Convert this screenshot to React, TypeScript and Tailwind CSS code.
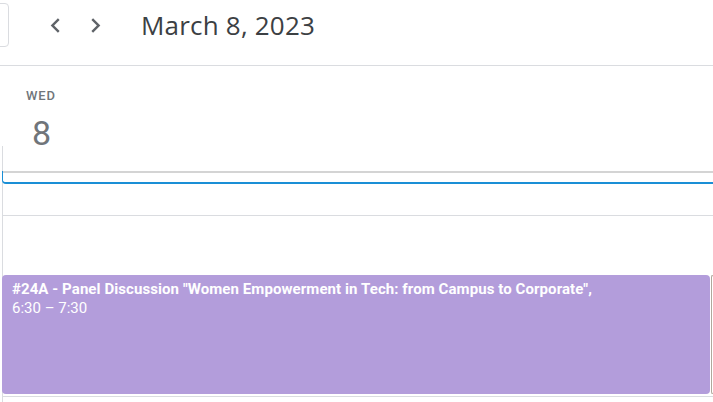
import React from 'react'

function Chevron({ dir }: { dir: 'left' | 'right' }) {
  return (
    <svg width="29" height="29" viewBox="0 0 24 24" fill="#5f6368">
      {dir === 'left' ? (
        <path d="M15.41 7.41 14 6l-6 6 6 6 1.41-1.41L10.83 12z" />
      ) : (
        <path d="M8.59 16.59 10 18l6-6-6-6-1.41 1.41L13.17 12z" />
      )}
    </svg>
  )
}

export default function App() {
  return (
    <div className="w-[713px] h-[402px] overflow-hidden bg-white font-['Roboto',sans-serif]">
      {/* top bar */}
      <div className="h-[66px] pt-[3px] border-b border-[#dadce0]">
        <div className="flex items-center h-[44px]">
          <div className="-ml-[51px] w-[60px] h-[44px] shrink-0 border border-[#dadce0] rounded-[4px]" />
          <button className="ml-[26px] w-[40px] h-[40px] flex items-center justify-center">
            <Chevron dir="left" />
          </button>
          <button className="w-[40px] h-[40px] flex items-center justify-center">
            <Chevron dir="right" />
          </button>
          <h1 className="ml-[26px] text-[26px] text-[#3c4043] font-['Open_Sans',sans-serif] tracking-[0.2px]">
            March 8, 2023
          </h1>
        </div>
      </div>

      {/* day header */}
      <div className="h-[80px] pl-[26px] pt-[22px]">
        <div className="text-[13px] font-medium text-[#70757a] leading-[16px] tracking-[0.8px]">WED</div>
        <div className="pl-[6px] mt-[9px] text-[34px] leading-[40px] text-[#70757a]">8</div>
      </div>

      {/* grid */}
      <div className="ml-[2px] border-l border-[#dadce0]">
        <div className="h-[25px]" />
        <div className="h-[12px] border-t-2 border-[#d4d4d4]" />
        <div className="-ml-px h-[1px]" />
        <div className="-mt-[13px] -ml-px h-[13px] border-l border-b-2 border-[#1a8fd6] rounded-bl-[4px]" />
        <div className="h-[32px] border-b border-[#dadce0]" />
        <div className="h-[59px]" />
        <div className="flex h-[119px] -ml-px">
          <div className="flex-1 bg-[#b39ddb] rounded-[4px] px-[10px] pt-[5px] text-white text-[15px] leading-[19px]">
            <div className="font-bold tracking-[0.08px]">
              #24A - Panel Discussion "Women Empowerment in Tech: from Campus to Corporate",
            </div>
            <div>6:30 – 7:30</div>
          </div>
          <div className="ml-[1px] w-[2px] shrink-0 border border-r-0 border-[#b0a89c] rounded-l-[3px]" />
        </div>
        <div className="h-[2px]" />
        <div className="h-[6px] border-t border-[#dadce0]" />
      </div>
    </div>
  )
}
